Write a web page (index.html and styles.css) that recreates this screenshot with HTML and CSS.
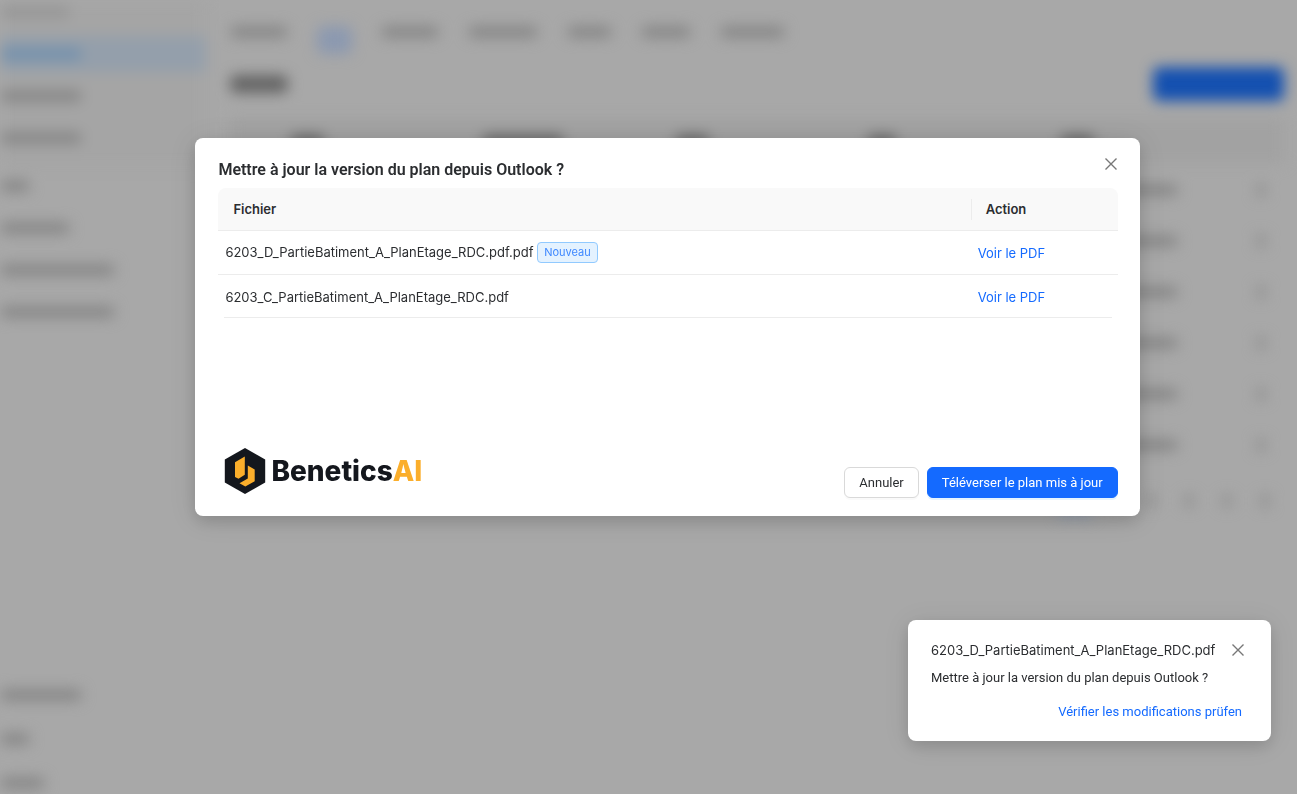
FILE: index.html
```html
<!DOCTYPE html>
<html lang="fr">
<head>
    <meta charset="UTF-8">
    <meta name="viewport" content="width=device-width, initial-scale=1.0">
    <title>BeneticsAI</title>
    <link rel="stylesheet" href="styles.css">
</head>
<body>
    <!-- blurred app behind the dialog -->
    <div class="app" aria-hidden="true">
        <aside class="sidebar">
            <div class="nav-group nav-projects">
                <div class="nav-label"><span class="bar w-70 light"></span></div>
                <div class="nav-item active"><span class="bar w-80"></span></div>
                <div class="nav-item"><span class="bar w-80"></span></div>
                <div class="nav-item"><span class="bar w-80"></span></div>
            </div>
            <div class="nav-group">
                <div class="nav-item"><span class="bar w-30"></span></div>
                <div class="nav-item"><span class="bar w-70"></span></div>
                <div class="nav-item"><span class="bar w-115"></span></div>
                <div class="nav-item"><span class="bar w-115"></span></div>
            </div>
            <div class="nav-bottom">
                <span class="bar w-80"></span>
                <span class="bar w-30"></span>
                <span class="bar w-45"></span>
            </div>
        </aside>
        <main class="content">
            <div class="tabs">
                <span class="bar w-60"></span>
                <span class="bar w-35 current"></span>
                <span class="bar w-60"></span>
                <span class="bar w-70"></span>
                <span class="bar w-45"></span>
                <span class="bar w-50"></span>
                <span class="bar w-65"></span>
            </div>
            <div class="page-head">
                <span class="bar title w-60"></span>
                <span class="add"></span>
            </div>
            <div class="plans">
                <div class="plan-row head">
                    <span></span>
                    <span class="bar w-35"></span>
                    <span class="bar w-80"></span>
                    <span class="bar w-35"></span>
                    <span class="bar w-30"></span>
                    <span class="bar w-35"></span>
                </div>
                <div class="plan-row"><span class="bar w-115 last"></span><span class="dot"></span></div>
                <div class="plan-row"><span class="bar w-115 last"></span><span class="dot"></span></div>
                <div class="plan-row"><span class="bar w-115 last"></span><span class="dot"></span></div>
                <div class="plan-row"><span class="bar w-115 last"></span><span class="dot"></span></div>
                <div class="plan-row"><span class="bar w-115 last"></span><span class="dot"></span></div>
                <div class="plan-row"><span class="bar w-115 last"></span><span class="dot"></span></div>
            </div>
            <div class="pages">
                <span class="page-active"></span>
                <span class="dot"></span>
                <span class="dot"></span>
                <span class="dot"></span>
                <span class="dot"></span>
                <span class="dot"></span>
            </div>
        </main>
    </div>

    <div class="overlay">
        <div class="modal" role="dialog" aria-labelledby="modal-title">
            <div class="modal-head">
                <h1 id="modal-title">Mettre à jour la version du plan depuis Outlook ?</h1>
                <button class="close" type="button" aria-label="Fermer">
                    <svg width="12" height="12" viewBox="0 0 12 12"><path d="M.5.5l11 11M11.5.5l-11 11"/></svg>
                </button>
            </div>
            <table class="files">
                <thead>
                    <tr>
                        <th>Fichier</th>
                        <th class="col-action">Action</th>
                    </tr>
                </thead>
                <tbody>
                    <tr>
                        <td>6203_D_PartieBatiment_A_PlanEtage_RDC.pdf.pdf <span class="tag">Nouveau</span></td>
                        <td><a href="#">Voir le PDF</a></td>
                    </tr>
                    <tr>
                        <td>6203_C_PartieBatiment_A_PlanEtage_RDC.pdf</td>
                        <td><a href="#">Voir le PDF</a></td>
                    </tr>
                </tbody>
            </table>
            <div class="modal-foot">
                <div class="logo">
                    <svg width="42" height="46" viewBox="0 0 42 46">
                        <path fill="#14171d" d="M21 0l20.200 11.500v23L21 46 .8 34.500v-23z"/>
                        <path fill="#fbae2b" d="M20.800 8.500v18.300l-6.300 4-3.500-1.800V14.200z"/>
                        <path fill="#fbae2b" d="M23.800 17.400l6.900 4v11.800l-9.400 5.300-5.800-3.200 8.300-4.900z"/>
                    </svg>
                    <span class="logo-text">Benetics<b>AI</b></span>
                </div>
                <div class="actions">
                    <button class="btn" type="button">Annuler</button>
                    <button class="btn primary" type="button">Téléverser le plan mis à jour</button>
                </div>
            </div>
        </div>
    </div>

    <div class="toast" role="status">
        <div class="toast-head">
            <span class="file-name">6203_D_PartieBatiment_A_PlanEtage_RDC.pdf</span>
            <button class="close" type="button" aria-label="Fermer">
                <svg width="12" height="12" viewBox="0 0 12 12"><path d="M.5.5l11 11M11.5.5l-11 11"/></svg>
            </button>
        </div>
        <p>Mettre à jour la version du plan depuis Outlook ?</p>
        <a href="#">Vérifier les modifications prüfen</a>
    </div>
</body>
</html>
```

FILE: styles.css
```css
:root {
    --blue: #146aff;
    --text: #2b2d30;
    --line: #ececec;
    --bar: #878787;
}

* {
    box-sizing: border-box;
    margin: 0;
    padding: 0;
}

body {
    font-family: Roboto, "Liberation Sans", sans-serif;
    font-size: 13px;
    line-height: 20px;
    color: var(--text);
    background-color: #a8a8a8;
    overflow: hidden;
}

a {
    color: var(--blue);
    text-decoration: none;
}

/* background app */
.app {
    display: flex;
    height: 100vh;
    filter: blur(7px);
}

.sidebar {
    width: 206px;
    flex-shrink: 0;
    display: flex;
    flex-direction: column;
}

.nav-group {
    display: flex;
    flex-direction: column;
    gap: 6px;
    padding-bottom: 12px;
}

.nav-projects {
    background-color: #a5a5a5;
}

.nav-label {
    height: 30px;
    padding-top: 6px;
}

.nav-item {
    height: 36px;
    display: flex;
    align-items: center;
}

.nav-item.active {
    background-color: #949fab;
}

.nav-item.active .bar {
    background-color: #7390ac;
}

.nav-bottom {
    margin-top: auto;
    padding-bottom: 5px;
    display: flex;
    flex-direction: column;
    gap: 32px;
}

.bar {
    display: block;
    height: 12px;
    border-radius: 6px;
    background-color: var(--bar);
}

.bar.light {
    background-color: #969696;
}

.bar.title {
    height: 18px;
    background-color: #646464;
}

.w-30 { width: 30px; }
.w-35 { width: 35px; }
.w-45 { width: 45px; }
.w-50 { width: 50px; }
.w-60 { width: 58px; }
.w-65 { width: 65px; }
.w-70 { width: 70px; }
.w-80 { width: 82px; }
.w-115 { width: 115px; }

.content {
    flex: 1;
    padding: 0 13px 0 24px;
}

.tabs {
    display: flex;
    align-items: flex-start;
    gap: 29px;
    height: 66px;
    padding-top: 26px;
}

.bar.current {
    height: 28px;
    background-color: #8c99b0;
}

.page-head {
    display: flex;
    align-items: center;
    justify-content: space-between;
    height: 36px;
}

.add {
    width: 131px;
    height: 34px;
    border-radius: 6px;
    background-color: #1450b0;
}

.plans {
    margin-top: 16px;
}

.plan-row {
    display: flex;
    align-items: center;
    justify-content: flex-end;
    height: 51px;
    padding-right: 18px;
}

.plan-row.head {
    display: grid;
    grid-template-columns: 60px repeat(5, 1fr);
    height: 46px;
    padding-right: 32px;
    background-color: #a2a2a2;
}

.plan-row.head .bar {
    background-color: #646464;
}

.bar.last {
    margin-right: 78px;
}

.dot {
    width: 10px;
    height: 12px;
    background-color: #929292;
}

.pages {
    display: grid;
    grid-template-columns: repeat(6, 38px);
    align-items: center;
    justify-items: center;
    justify-content: end;
    height: 62px;
}

.page-active {
    width: 34px;
    height: 34px;
    background-color: #949eac;
}

/* dialog */
.overlay {
    position: fixed;
    inset: 0;
    display: flex;
    align-items: flex-start;
    justify-content: center;
    padding: 138px 0 0 38px;
}

.modal {
    width: 75%;
    min-height: 378px;
    display: flex;
    flex-direction: column;
    padding: 16px 22px 18px 23px;
    background-color: #fff;
    border-radius: 8px;
    box-shadow: 0 6px 16px rgba(0, 0, 0, 0.12), 0 3px 28px rgba(0, 0, 0, 0.1);
}

.modal-head {
    display: flex;
    align-items: flex-start;
    justify-content: space-between;
    height: 34px;
}

h1 {
    padding-top: 5px;
    font-size: 16px;
    line-height: 22px;
    font-weight: 600;
}

.close {
    width: 20px;
    height: 20px;
    display: flex;
    align-items: center;
    justify-content: center;
    border: 0;
    background: none;
    cursor: pointer;
}

.modal-head .close {
    margin-right: -3px;
}

.close svg {
    fill: none;
    stroke: #777;
    stroke-width: 1.4;
}

.files,
.file-name,
.logo-text {
    font-family: Inter, "Liberation Sans", sans-serif;
}

.files {
    width: 100%;
    border-collapse: separate;
    border-spacing: 0;
}

.files th {
    position: relative;
    height: 43px;
    padding-left: 15px;
    text-align: left;
    font-weight: 600;
    background-color: #f9f9f9;
    border-bottom: 1px solid var(--line);
}

.files th:first-child {
    border-top-left-radius: 8px;
}

.files th:last-child {
    border-top-right-radius: 8px;
}

.col-action {
    width: 147px;
}

.col-action::before {
    content: "";
    position: absolute;
    left: 0;
    top: 11px;
    height: 21px;
    border-left: 1px solid var(--line);
}

.files td {
    height: 44px;
    padding-left: 7px;
    border-bottom: 1px solid var(--line);
}

/* the last rule stops short of the table edges */
.files tbody tr:last-child td {
    position: relative;
    height: 43px;
    border-bottom: 0;
}

.files tbody tr:last-child td::after {
    content: "";
    position: absolute;
    left: 0;
    right: 0;
    bottom: 0;
    border-bottom: 1px solid var(--line);
}

.files tbody tr:last-child td:first-child::after {
    left: 6px;
}

.files tbody tr:last-child td:last-child::after {
    right: 6px;
}

.tag {
    display: inline-block;
    vertical-align: middle;
    padding: 0 6px;
    font-size: 11px;
    line-height: 19px;
    color: #3d87ff;
    background-color: #e4f2ff;
    border: 1px solid #91caff;
    border-radius: 4px;
}

.modal-foot {
    margin-top: auto;
    display: flex;
    align-items: flex-end;
    justify-content: space-between;
}

.logo {
    display: flex;
    align-items: center;
    gap: 5px;
    padding: 0 0 4px 6px;
}

.logo-text {
    font-size: 28px;
    line-height: 32px;
    font-weight: 800;
    color: #14171d;
}

.logo-text b {
    font-weight: inherit;
    color: #fbae2b;
}

.actions {
    display: flex;
    gap: 8px;
}

.btn {
    height: 31px;
    padding: 0 14px;
    font: inherit;
    color: var(--text);
    background-color: #fff;
    border: 1px solid #d9d9d9;
    border-radius: 6px;
    box-shadow: 0 2px 0 rgba(0, 0, 0, 0.02);
    cursor: pointer;
}

.btn.primary {
    color: #fff;
    background-color: var(--blue);
    border-color: var(--blue);
    box-shadow: 0 2px 0 rgba(5, 145, 255, 0.1);
}

/* toast */
.toast {
    position: fixed;
    right: 26px;
    bottom: 53px;
    width: 363px;
    display: flex;
    flex-direction: column;
    padding: 20px 23px 19px;
    background-color: #fff;
    border-radius: 8px;
    box-shadow: 0 6px 16px rgba(0, 0, 0, 0.12), 0 3px 28px rgba(0, 0, 0, 0.08);
}

.toast-head {
    display: flex;
    justify-content: space-between;
}

.toast p {
    margin-top: 8px;
}

.toast a {
    align-self: flex-end;
    margin: 14px 6px 0 0;
}
```
